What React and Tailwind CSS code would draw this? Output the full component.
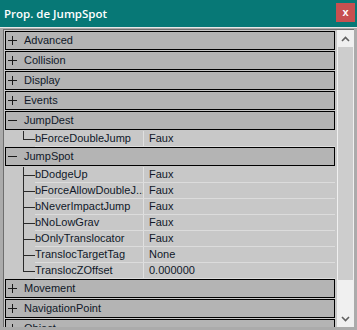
import React from 'react';

const TOP = ['Advanced', 'Collision', 'Display', 'Events'];

const JUMPSPOT = [
  ['bDodgeUp', 'Faux'],
  ['bForceAllowDoubleJ...', 'Faux'],
  ['bNeverImpactJump', 'Faux'],
  ['bNoLowGrav', 'Faux'],
  ['bOnlyTranslocator', 'Faux'],
  ['TranslocTargetTag', 'None'],
  ['TranslocZOffset', '0.000000'],
];

function Sign({ open }) {
  return (
    <svg width="9" height="9" viewBox="0 0 9 9" className="shrink-0">
      <path d="M0 4.5h9" stroke="#1a1a1a" strokeWidth="1" />
      {!open && <path d="M4.5 0v9" stroke="#1a1a1a" strokeWidth="1" />}
    </svg>
  );
}

function Category({ label, open }) {
  return (
    <div className="h-[19px] mb-px border border-black bg-[#b4b4b4] flex items-center pl-[2px] gap-[7px] text-[#101828]">
      <Sign open={open} />
      <span>{label}</span>
    </div>
  );
}

function Prop({ name, value, last, h = 16 }) {
  return (
    <div className="flex" style={{ height: h }}>
      <div className="w-[18px] shrink-0" />
      <div className="w-[12px] shrink-0 relative">
        <div className={`absolute left-0 top-0 w-px bg-[#2a2a2a] ${last ? 'h-1/2' : 'h-full'}`} />
        <div className="absolute left-0 top-1/2 w-full h-px bg-[#2a2a2a]" />
      </div>
      <div className="flex-1 flex border-b border-[#dcdcdc]">
        <div className="w-[109px] shrink-0 flex items-center text-[#101828] border-r border-[#e0e0e0] whitespace-nowrap overflow-hidden">
          {name}
        </div>
        <div className="flex-1 flex items-center pl-[5px] text-[#101828]">{value}</div>
      </div>
    </div>
  );
}

export default function App() {
  return (
    <div
      className="w-[357px] h-[330px] bg-[#ababab] flex flex-col overflow-hidden text-[11px] leading-none"
      style={{ fontFamily: '"Liberation Sans", Arial, sans-serif' }}
    >
      <div className="h-[27px] shrink-0 bg-[#077876] flex items-center justify-between pl-[4px] pr-[2px]">
        <span className="text-white text-[11.5px] font-semibold" style={{ fontFamily: '"Open Sans", sans-serif' }}>
          Prop. de JumpSpot
        </span>
        <div className="w-[19px] h-[19px] bg-[#c75050] flex items-center justify-center text-white text-[11px] font-bold mb-[2px]">
          x
        </div>
      </div>
      <div className="h-px bg-[#e8e8e8] shrink-0" />
      <div className="flex-1 flex px-[3px] pt-[1px] min-h-0">
        <div className="flex-1 flex border-l border-t border-[#6e6e6e] bg-[#c8c8c8] min-h-0 overflow-hidden">
          <div className="flex-1 pt-[1px] pl-[1px] pr-[2px] overflow-hidden">
            {TOP.map((c) => (
              <Category key={c} label={c} />
            ))}
            <Category label="JumpDest" open />
            <Prop name="bForceDoubleJump" value="Faux" last h={16} />
            <Category label="JumpSpot" open />
            {JUMPSPOT.map(([n, v], i) => (
              <Prop key={n} name={n} value={v} last={i === JUMPSPOT.length - 1} />
            ))}
            <Category label="Movement" />
            <Category label="NavigationPoint" />
            <Category label="Object" />
          </div>
          <div className="w-[17px] shrink-0 bg-[#f0f0f0] flex flex-col">
            <div className="h-[17px] flex items-center justify-center">
              <svg width="9" height="6" viewBox="0 0 9 6">
                <path d="M1 5l3.5-3.5L8 5" stroke="#606060" strokeWidth="1.6" fill="none" />
              </svg>
            </div>
            <div className="h-[233px] mx-px bg-[#cdcdcd]" />
            <div className="flex-1" />
            <div className="h-[17px] flex items-center justify-center">
              <svg width="9" height="6" viewBox="0 0 9 6">
                <path d="M1 1l3.5 3.5L8 1" stroke="#606060" strokeWidth="1.6" fill="none" />
              </svg>
            </div>
          </div>
        </div>
      </div>
      <div className="h-[3px] shrink-0" />
    </div>
  );
}
